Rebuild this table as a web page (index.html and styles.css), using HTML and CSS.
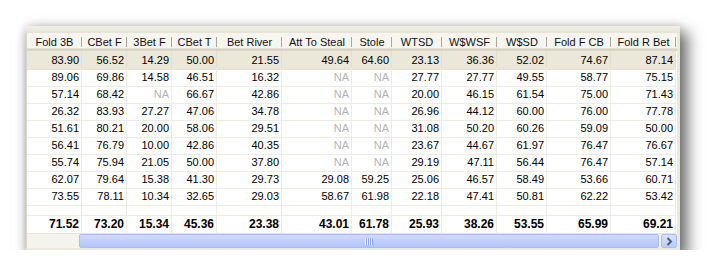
FILE: index.html
```html
<!DOCTYPE html>
<html>
<head>
<meta charset="utf-8">
<link rel="stylesheet" href="styles.css">
</head>
<body>
<div class="panel">
  <div class="strip"></div>
  <div class="content">
    <div class="row head">
      <div>Fold 3B</div><div>CBet F</div><div>3Bet F</div><div>CBet T</div><div>Bet River</div><div>Att To Steal</div><div>Stole</div><div>WTSD</div><div>W$WSF</div><div>W$SD</div><div>Fold F CB</div><div>Fold R Bet</div>
    </div>
    <div class="row data sel">
      <div>83.90</div><div>56.52</div><div>14.29</div><div>50.00</div><div>21.55</div><div>49.64</div><div>64.60</div><div>23.13</div><div>36.36</div><div>52.02</div><div>74.67</div><div>87.14</div>
    </div>
    <div class="row data">
      <div>89.06</div><div>69.86</div><div>14.58</div><div>46.51</div><div>16.32</div><div class="na">NA</div><div class="na">NA</div><div>27.77</div><div>27.77</div><div>49.55</div><div>58.77</div><div>75.15</div>
    </div>
    <div class="row data">
      <div>57.14</div><div>68.42</div><div class="na">NA</div><div>66.67</div><div>42.86</div><div class="na">NA</div><div class="na">NA</div><div>20.00</div><div>46.15</div><div>61.54</div><div>75.00</div><div>71.43</div>
    </div>
    <div class="row data">
      <div>26.32</div><div>83.93</div><div>27.27</div><div>47.06</div><div>34.78</div><div class="na">NA</div><div class="na">NA</div><div>26.96</div><div>44.12</div><div>60.00</div><div>76.00</div><div>77.78</div>
    </div>
    <div class="row data">
      <div>51.61</div><div>80.21</div><div>20.00</div><div>58.06</div><div>29.51</div><div class="na">NA</div><div class="na">NA</div><div>31.08</div><div>50.20</div><div>60.26</div><div>59.09</div><div>50.00</div>
    </div>
    <div class="row data">
      <div>56.41</div><div>76.79</div><div>10.00</div><div>42.86</div><div>40.35</div><div class="na">NA</div><div class="na">NA</div><div>23.67</div><div>44.67</div><div>61.97</div><div>76.47</div><div>76.67</div>
    </div>
    <div class="row data">
      <div>55.74</div><div>75.94</div><div>21.05</div><div>50.00</div><div>37.80</div><div class="na">NA</div><div class="na">NA</div><div>29.19</div><div>47.11</div><div>56.44</div><div>76.47</div><div>57.14</div>
    </div>
    <div class="row data">
      <div>62.07</div><div>79.64</div><div>15.38</div><div>41.30</div><div>29.73</div><div>29.08</div><div>59.25</div><div>25.06</div><div>46.57</div><div>58.49</div><div>53.66</div><div>60.71</div>
    </div>
    <div class="row data">
      <div>73.55</div><div>78.11</div><div>10.34</div><div>32.65</div><div>29.03</div><div>58.67</div><div>61.98</div><div>22.18</div><div>47.41</div><div>50.81</div><div>62.22</div><div>53.42</div>
    </div>
    <div class="row data blank">
      <div></div><div></div><div></div><div></div><div></div><div></div><div></div><div></div><div></div><div></div><div></div><div></div>
    </div>
    <div class="row data total">
      <div>71.52</div><div>73.20</div><div>15.34</div><div>45.36</div><div>23.38</div><div>43.01</div><div>61.78</div><div>25.93</div><div>38.26</div><div>53.55</div><div>65.99</div><div>69.21</div>
    </div>
    <div class="scrollbar">
      <div class="track"></div>
      <div class="thumb"><span class="grip"></span></div>
      <div class="btn">
        <svg width="9" height="9" viewBox="0 0 9 9"><polyline points="2.5,1 6,4.5 2.5,8" fill="none" stroke="#4d6185" stroke-width="2"/></svg>
      </div>
    </div>
  </div>
</div>
</body>
</html>
```
FILE: styles.css
```css
html, body {
  margin: 0;
  padding: 0;
  background: #ffffff;
}
body {
  padding: 26px 0 0 26px;
  font-family: "Liberation Sans", Arial, sans-serif;
  font-size: 11px;
  color: #000;
}
.panel {
  width: 654px;
  height: 224px;
  background: #ece9d8;
  box-shadow: 6px 8px 14px 2px rgba(0, 0, 0, 0.55), 0 0 8px rgba(0, 0, 0, 0.15);
  display: flex;
  flex-direction: column;
}
.strip {
  height: 7px;
  background: linear-gradient(#f3f1e8, #e6e3d3);
}
.content {
  width: 650px;
  display: flex;
  flex-direction: column;
  background: #ffffff;
  border-left: 1px solid #d9d6c8;
}
.row {
  display: grid;
  grid-template-columns: 55px 45px 45px 45px 65px 70px 40px 50px 55px 50px 64px 65px;
}
.head {
  height: 16px;
  background: #f6f5f0;
  border-bottom: 2px solid #d8d4c4;
  box-shadow: inset 0 -1px 0 #e4e1d2;
}
.head div {
  display: flex;
  align-items: center;
  justify-content: center;
  line-height: 16px;
  padding-top: 1px;
  white-space: nowrap;
  color: #111;
  background: linear-gradient(#aca899, #aca899) right 4px / 1px 10px no-repeat;
}
.data {
  height: 17px;
}
.data div {
  box-sizing: border-box;
  border-right: 1px solid #ecebe4;
  border-bottom: 1px solid #ecebe4;
  text-align: right;
  padding-right: 2px;
  line-height: 18px;
  white-space: nowrap;
}
.sel div {
  background: #ebe8d9;
  border-right-color: #e3e0d0;
  border-bottom-color: #e3e0d0;
}
.na {
  color: #b3b3b3;
}
.blank {
  height: 12px;
}
.total {
  height: 17px;
  font-weight: bold;
  font-size: 12px;
}
.total div {
  line-height: 17px;
  border-bottom-color: #e6e4da;
}
.scrollbar {
  height: 14px;
  margin-top: 1px;
  display: flex;
  background: #f4f3ee;
}
.track {
  width: 52px;
}
.thumb {
  flex: 1;
  margin-right: 2px;
  box-sizing: border-box;
  border: 1px solid #a8bdf2;
  border-radius: 2px;
  background: linear-gradient(#cfdcfd, #bccdf9 60%, #b3c6f7);
  display: flex;
  align-items: center;
  justify-content: center;
}
.grip {
  width: 8px;
  height: 7px;
  background: repeating-linear-gradient(90deg, #eef3ff 0 1px, #8ca6e6 1px 2px);
}
.btn {
  width: 16px;
  box-sizing: border-box;
  border: 1px solid #a8bdf2;
  border-radius: 2px;
  background: linear-gradient(#d6e2fe, #bacbf8);
  display: flex;
  align-items: center;
  justify-content: center;
}
.btn svg {
  display: block;
}
```
